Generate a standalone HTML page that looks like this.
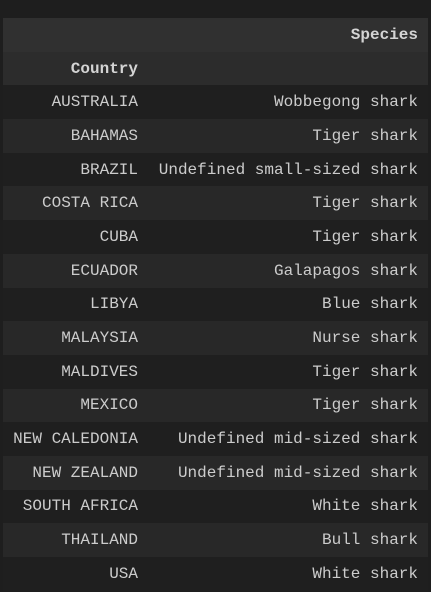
<!DOCTYPE html>
<html><head><style>
html,body{margin:0;padding:0;background:#1e1e1e;width:431px;height:592px;overflow:hidden}
table{position:absolute;left:3px;top:18px;width:425px;border-collapse:collapse;table-layout:fixed;font-family:"Liberation Mono",monospace;font-size:16px;color:#cccccc}
td,th{height:33.7px;padding:0 10px 0 0;text-align:right;white-space:nowrap;line-height:16px;overflow:visible}
th{font-weight:bold;color:#d4d4d4}
tr.h1{background:#303030}
tr.h2{background:#2c2c2c}
tr.l{background:#282828}
tr.d{background:#1f1f1f}
col.c{width:145px}
</style></head><body>
<table>
<colgroup><col class="c"><col></colgroup>
<tr class="h1"><th></th><th>Species</th></tr>
<tr class="h2"><th>Country</th><th></th></tr>
<tr class="d"><td>AUSTRALIA</td><td>Wobbegong shark</td></tr>
<tr class="l"><td>BAHAMAS</td><td>Tiger shark</td></tr>
<tr class="d"><td>BRAZIL</td><td>Undefined small-sized shark</td></tr>
<tr class="l"><td>COSTA RICA</td><td>Tiger shark</td></tr>
<tr class="d"><td>CUBA</td><td>Tiger shark</td></tr>
<tr class="l"><td>ECUADOR</td><td>Galapagos shark</td></tr>
<tr class="d"><td>LIBYA</td><td>Blue shark</td></tr>
<tr class="l"><td>MALAYSIA</td><td>Nurse shark</td></tr>
<tr class="d"><td>MALDIVES</td><td>Tiger shark</td></tr>
<tr class="l"><td>MEXICO</td><td>Tiger shark</td></tr>
<tr class="d"><td>NEW CALEDONIA</td><td>Undefined mid-sized shark</td></tr>
<tr class="l"><td>NEW ZEALAND</td><td>Undefined mid-sized shark</td></tr>
<tr class="d"><td>SOUTH AFRICA</td><td>White shark</td></tr>
<tr class="l"><td>THAILAND</td><td>Bull shark</td></tr>
<tr class="d"><td>USA</td><td>White shark</td></tr>
</table>
</body></html>
